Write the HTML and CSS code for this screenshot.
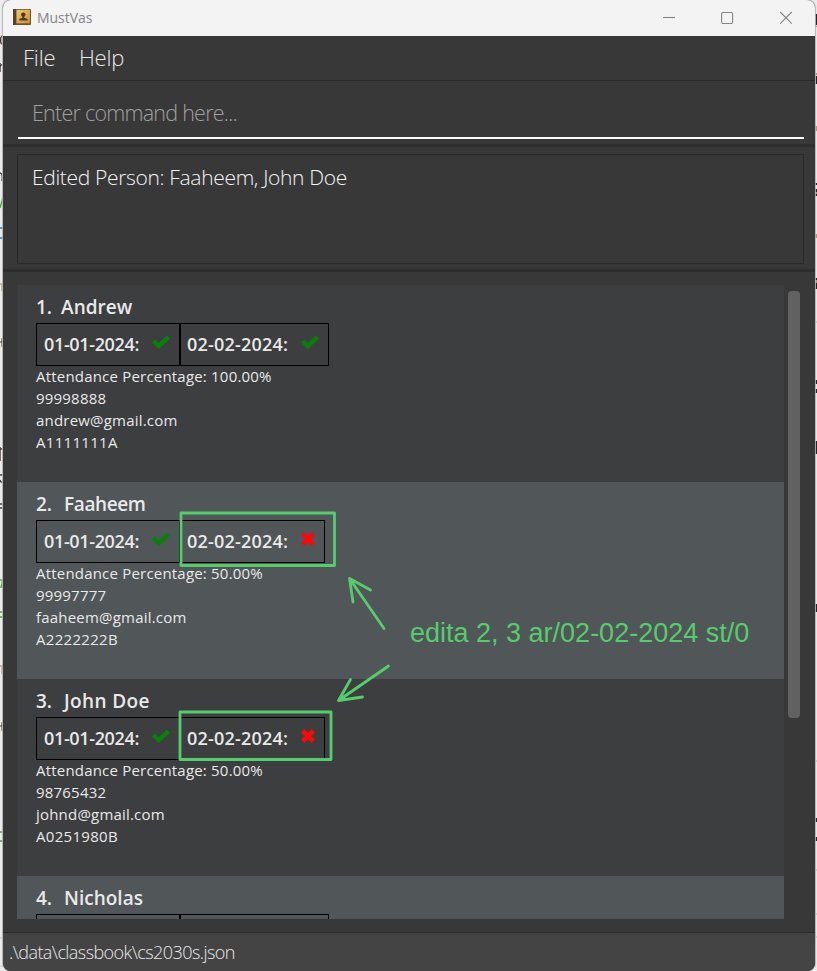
FILE: index.html
```
<!DOCTYPE html>
<html lang="en">
<head>
<meta charset="utf-8">
<title>MustVas</title>
<link rel="stylesheet" href="styles.css">
</head>
<body>
<svg class="backdrop" viewBox="0 0 817 971" aria-hidden="true">
  <path d="M0 938H3M0 966H3" stroke="#c4c4c4" fill="none"/>
  <path d="M2.5 36C0 36 0 44 2.5 44M0 63V72M0 67Q1 64 3 65M0 173Q3 173 2 181M0 447V461M0 449H3M0 475H3M0 480Q1 483 3 482M0 504H3M0 508H3" stroke="#4a3a36" stroke-width="1.4" fill="none"/>
  <path d="M0 208L3 197M0 580Q4 579 1 587H3M0 612H3M0 617H3M0 832H2M0 841H3" stroke="#4b9a35" stroke-width="1.3" fill="none"/>
  <path d="M0 228H3M0 238H3" stroke="#2b6da5" stroke-width="1.4" fill="none"/>
  <path d="M0 284H3M2 284V291M0 666H3M2 666V674" stroke="#a58b45" fill="none"/>
  <path d="M0 342H3M2 338V347M0 726H3M2 722V731" stroke="#493218" fill="none"/>
  <path d="M816 14V25M816 76V84M816 183V185M816 189V196M816 278V289M816 380V384M816 389V393M816 441V454M816 604V612M816 818V822M816 837V841" stroke="#11141a" stroke-width="2"/>
  <path d="M816 26V27M816 73V75M816 126V131M816 192V194M816 234V238M816 280V283" stroke="#c98a48" stroke-width="2"/>
  <path d="M815 322H817M815 761H817M815 870H817M815 914H817M815 937H817" stroke="#aaa"/>
</svg>
<div class="window">
  <header class="titlebar">
    <svg class="app-icon" viewBox="0 0 19 18">
      <defs><linearGradient id="g" x2="1" y2="1"><stop stop-color="#efc873"/><stop offset="1" stop-color="#c58f38"/></linearGradient></defs>
      <rect x="0" y="0" width="18" height="16" rx="1" fill="#765024"/>
      <rect x="3.5" y=".8" width="13.5" height="13.5" fill="url(#g)"/>
      <rect x="0" y="0" width="3" height="16" fill="#53402f"/>
      <circle cx="10.3" cy="5.6" r="2.2" fill="#4e3920"/>
      <path d="M9.4 6.3h1.8v2.4l3.3 1.2v1.6H6.2v-1.6l3.2-1.2z" fill="#4e3920"/>
    </svg>
    <span class="title">MustVas</span>
    <svg class="controls" viewBox="0 0 132 16" fill="none" stroke="#858585" stroke-width="1.1">
      <path d="M0 7.5H12"/>
      <rect x="58.6" y="2.5" width="11" height="11" rx="1.2"/>
      <path d="M117.2 2L128.8 13.6M128.8 2L117.2 13.6"/>
    </svg>
  </header>
  <nav class="menubar"><span class="file">File</span><span class="help">Help</span></nav>
  <section class="command"><div class="field"><span>Enter command here...</span></div></section>
  <section class="result"><div class="result-box"><span>Edited Person: Faaheem, John Doe</span></div></section>
  <main class="people">
    <div class="list">
      <article class="person">
        <h2><span class="num one">1.</span><span>Andrew</span></h2>
        <div class="dates"><div class="date first"><span>01-01-2024:</span><svg class="tick"><use href="#tick"/></svg></div><div class="date"><span>02-02-2024:</span><svg class="tick"><use href="#tick"/></svg></div></div>
        <p>Attendance Percentage: 100.00%</p><p>99998888</p><p>andrew@gmail.com</p><p class="id">A1111111A</p>
      </article>
      <article class="person alt">
        <h2><span class="num">2.</span><span class="tight">Faaheem</span></h2>
        <div class="dates"><div class="date first"><span>01-01-2024:</span><svg class="tick"><use href="#tick"/></svg></div><div class="date absent"><span>02-02-2024:</span><svg class="cross"><use href="#cross"/></svg></div></div>
        <p>Attendance Percentage: 50.00%</p><p>99997777</p><p>faaheem@gmail.com</p><p class="id">A2222222B</p>
      </article>
      <article class="person">
        <h2><span class="num">3.</span><span class="loose">John Doe</span></h2>
        <div class="dates"><div class="date first"><span>01-01-2024:</span><svg class="tick"><use href="#tick"/></svg></div><div class="date absent"><span>02-02-2024:</span><svg class="cross"><use href="#cross"/></svg></div></div>
        <p>Attendance Percentage: 50.00%</p><p>98765432</p><p>johnd@gmail.com</p><p class="id">A0251980B</p>
      </article>
      <article class="person alt">
        <h2><span class="num">4.</span><span>Nicholas</span></h2>
        <div class="dates"><div class="date first"></div><div class="date"></div></div>
      </article>
    </div>
    <div class="scroll"><div class="thumb"></div></div>
  </main>
  <footer class="status"><span>.\data\classbook\cs2030s.json</span></footer>
</div>
<svg class="annotations" viewBox="0 0 817 971" fill="none" stroke="#56cd6d" stroke-width="2.8" stroke-linecap="round" stroke-linejoin="round">
  <defs>
    <symbol id="tick" viewBox="0 0 18 14"><path d="M1.6 6.2L6.8 11L16.4 2.2" fill="none" stroke="#078207" stroke-width="4.4" stroke-linecap="butt"/></symbol>
    <symbol id="cross" viewBox="0 0 14 14"><path d="M1.6 1.6L12.4 12.4M12.4 1.6L1.6 12.4" fill="none" stroke="#fb0909" stroke-width="4.6" stroke-linecap="butt"/></symbol>
  </defs>
  <rect x="181" y="513" width="153.5" height="52.5"/>
  <rect x="180" y="712" width="151" height="47.5"/>
  <path d="M384 628.5L349.5 578.5M370.5 590L349.5 578.5L353 602"/>
  <path d="M388.5 666L338.5 700.5M350.5 679.5L338.5 700.5L362.5 697"/>
</svg>
<div class="note">edita 2, 3 ar/02-02-2024 st/0</div>
</body>
</html>
```
FILE: styles.css
```
* { box-sizing: border-box; }
body { margin: 0; width: 817px; height: 971px; overflow: hidden; position: relative; background: #ececec; font-family: "Open Sans", "Noto Sans", sans-serif; color: #e9e9e9; }
.backdrop, .annotations { position: absolute; left: 0; top: 0; width: 817px; height: 971px; pointer-events: none; }
.window { position: relative; width: 812px; height: 971px; margin-left: 3px; display: flex; flex-direction: column; background: #383838; border-radius: 8px; overflow: hidden; box-shadow: 0 0 1px 1px #b5b5b5; }
.titlebar { height: 36px; flex: none; background: #f3f3f3; display: flex; align-items: center; padding: 0 20px 0 10px; }
.app-icon { width: 19px; height: 18px; }
.title { font-size: 14px; line-height: 20px; margin-left: 5px; color: #858585; letter-spacing: -.05px; }
.controls { width: 132px; height: 16px; margin-left: auto; }
.menubar { height: 45px; flex: none; border-bottom: 1px solid #292929; display: flex; gap: 25px; padding-left: 20px; font-size: 22px; font-weight: 300; line-height: 43px; letter-spacing: -.2px; white-space: nowrap; }
.file { width: 31px; }
.command { height: 66px; flex: none; padding: 9px 11px 0 15px; border-bottom: 3px solid #2e2e2e; }
.field { height: 49px; border-bottom: 2px solid #fafafa; padding-left: 14px; font-size: 21.5px; line-height: 45px; font-weight: 300; letter-spacing: -.76px; color: #a0a0a0; }
.result { height: 125px; flex: none; padding: 7px 11px 0 14px; border-bottom: 3px solid #2d2d2d; }
.result-box { height: 110px; border: 1px solid #292929; padding: 0 14px; font-size: 21px; line-height: 44px; font-weight: 300; letter-spacing: -.33px; color: #f5f5f5; }
.people { height: 661px; flex: none; display: flex; padding: 13px 0 13px 14px; border-bottom: 1px solid #292929; }
.list { width: 767px; height: 634px; overflow: hidden; background: #3c3e3f; }
.person { height: 197px; padding: 9px 19px 0; background: #3c3e3f; }
.alt { background: #515658; }
h2 { display: flex; margin: 0; height: 29px; line-height: 27px; font-size: 19px; font-weight: 600; white-space: pre; }
.num { margin-right: 12px; }
.one { margin-right: 9px; }
.tight { letter-spacing: -.4px; }
.loose { letter-spacing: .35px; }
.dates { display: flex; height: 43px; }
.date { width: 149px; height: 43px; border: 1px solid #000; padding: 0 9px 0 6px; display: flex; justify-content: space-between; font-size: 18px; font-weight: 600; letter-spacing: .2px; line-height: 41px; white-space: nowrap; }
.first { width: 144px; padding-left: 7px; letter-spacing: -.35px; }
.absent { width: 145px; }
.tick { width: 18px; height: 14px; margin-top: 10.5px; }
.cross { width: 14px; height: 14px; margin-top: 11px; }
p { position: relative; top: -1px; margin: 0; height: 22px; line-height: 22px; font-size: 15px; letter-spacing: .2px; white-space: nowrap; }
.id { letter-spacing: .3px; }
.scroll { padding: 6px 0 0 4px; }
.thumb { width: 12px; height: 427px; border-radius: 4px; background: #616161; }
.status { flex: 1; background: #444; padding-left: 6px; font-size: 18px; line-height: 38px; font-weight: 300; letter-spacing: -.57px; }
.note { position: absolute; left: 410px; top: 617px; font: 27px/32px "Liberation Sans", sans-serif; color: #56cd6d; white-space: nowrap; }
```
